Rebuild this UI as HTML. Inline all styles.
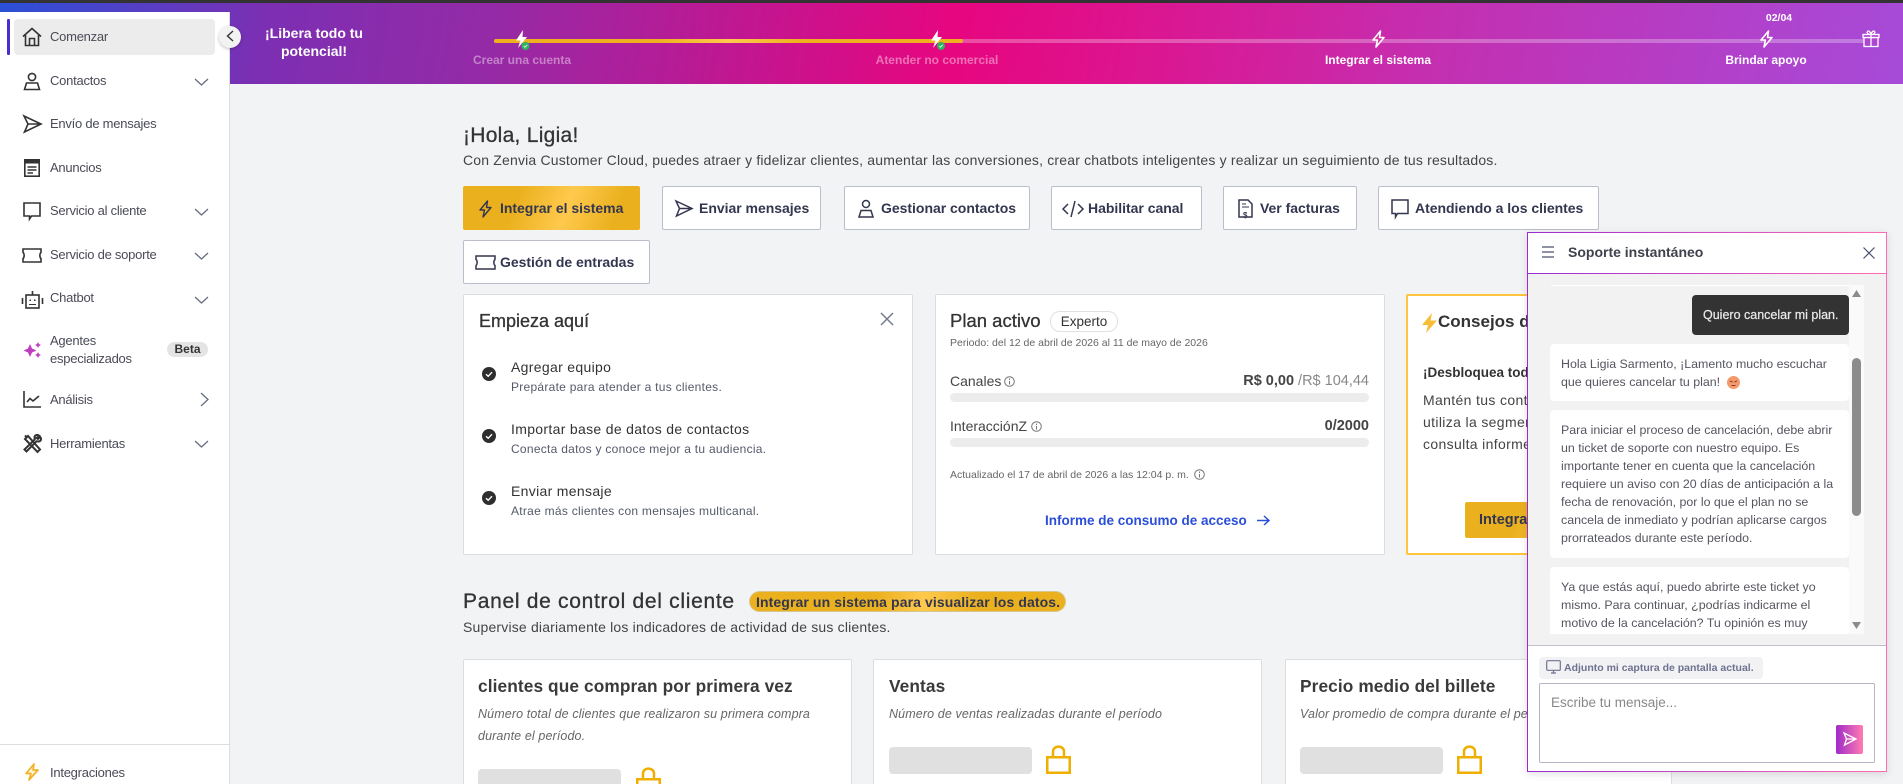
<!DOCTYPE html>
<html lang="es"><head><meta charset="utf-8"><title>Zenvia</title>
<style>
*{box-sizing:border-box}
html,body{margin:0;padding:0;width:1903px;height:784px;overflow:hidden;background:#f2f3f5;font-family:"Liberation Sans",sans-serif;color:#333}
#w{position:relative;width:1903px;height:784px;overflow:hidden;background:#f2f3f5}
.a{position:absolute}
.t{position:absolute;white-space:nowrap;line-height:20px;height:20px}
.c{transform:translateX(-50%)}
.r{transform:translateX(-100%)}
svg{position:absolute;overflow:visible}
.nav{font-size:13px;color:#4a4b57;left:50px;letter-spacing:-.25px}
.ic{fill:none;stroke:#333;stroke-width:1.6}
.chev{fill:none;stroke:#666d80;stroke-width:1.3}
.btn{position:absolute;background:#fff;border:1px solid #bcbdcc;border-radius:2px;height:44px}
.bt{font-size:14px;font-weight:700;color:#33364f;top:198px;letter-spacing:-.02px}
.card{position:absolute;background:#fff;border:1px solid #dcdde1;border-radius:2px}
.gold{background:linear-gradient(110deg,#eab01e 0%,#eab01e 30%,#ffc94d 58%,#eab01e 85%,#eab01e 100%)}
.lab{font-size:12px;font-weight:700;color:#fff;top:50px}
.h{font-size:18px;color:#333;font-weight:400;-webkit-text-stroke:.3px #333}
.ti{font-size:14px;color:#333;left:511px;letter-spacing:.32px}
.su{font-size:12px;color:#555a6a;left:511px;letter-spacing:.27px}
.m{position:absolute;font-size:12.4px;line-height:18px;color:#55565f;white-space:nowrap;left:1561px}
.ph{position:absolute;background:#e0e0e0;border-radius:4px;height:27px;width:143px}
.de{font-size:12.5px;font-style:italic;color:#666;letter-spacing:.12px}
.mt{font-size:17.3px;font-weight:700;color:#3a3a3a;letter-spacing:.1px;top:676px}
.sub{font-size:14px;color:#444;letter-spacing:.18px}
</style></head><body><div id="w">

<div class="a" style="left:0;top:0;width:1903px;height:3px;background:#333"></div>
<div class="a" style="left:0;top:3px;width:1903px;height:81px;background:linear-gradient(100deg,#2a50d8 0%,#7c2fb3 14%,#952aa6 26%,#e6067f 50%,#dc1590 60%,#c42fb0 75%,#a64bd9 100%)"></div>

<!-- progress -->
<div class="a" style="left:494px;top:39px;width:1376px;height:4px;background:rgba(255,255,255,.28);border-radius:2px"></div>
<div class="a" style="left:494px;top:39px;width:469px;height:4px;border-radius:2px;background:linear-gradient(90deg,#eeb01f 0%,#eeb01f 35%,#ffca4f 50%,#eeb01f 65%,#eeb01f 100%)"></div>
<svg style="left:513px;top:30px" width="18" height="18" viewBox="0 0 18 18"><path d="M10 0L3 10.5H7.5L5 18L14 7H9.5Z" fill="#fff"/><circle cx="12.5" cy="16" r="4" fill="#2fb45f"/><path d="M10.8 16l1.2 1.2 2.2-2.2" stroke="#d8f5e0" stroke-width=".9" fill="none"/></svg>
<svg style="left:928px;top:30px" width="18" height="18" viewBox="0 0 18 18"><path d="M10 0L3 10.5H7.5L5 18L14 7H9.5Z" fill="#fff"/><circle cx="13" cy="16" r="4" fill="#2fb45f"/><path d="M11.3 16l1.2 1.2 2.2-2.2" stroke="#d8f5e0" stroke-width=".9" fill="none"/></svg>
<svg style="left:1371px;top:30px" width="15" height="18" viewBox="0 0 15 18"><path d="M9.5 1L2 10H6.5L5 17L13 7.5H8.5Z" fill="#d82ca0" stroke="#fff" stroke-width="1.6" stroke-linejoin="round"/></svg>
<svg style="left:1759px;top:30px" width="15" height="18" viewBox="0 0 15 18"><path d="M9.5 1L2 10H6.5L5 17L13 7.5H8.5Z" fill="#b63cc6" stroke="#fff" stroke-width="1.6" stroke-linejoin="round"/></svg>
<svg style="left:1862px;top:30px" width="18" height="17" viewBox="0 0 18 17"><g fill="#ad47d2" stroke="#fff" stroke-width="1.3"><rect x="2" y="7.5" width="14" height="9"/><rect x="1" y="4.5" width="16" height="3"/><path d="M9 4.5V16.500M9 4.5C6 4.500 4.500 3 5.500 1.500S8.500 2 9 4.500C9.500 2 11.500 0 12.500 1.500S12 4.500 9 4.500Z"/></g></svg>
<div class="t c" style="left:1779px;top:8px;font-size:10.5px;font-weight:700;color:#fff">02/04</div>
<div class="t c lab" style="left:522px;color:rgba(255,255,255,.42)">Crear una cuenta</div>
<div class="t c lab" style="left:937px;color:rgba(255,255,255,.42)">Atender no comercial</div>
<div class="t c lab" style="left:1378px">Integrar el sistema</div>
<div class="t c lab" style="left:1766px">Brindar apoyo</div>
<div class="t c" style="left:314px;top:23px;font-size:14px;font-weight:700;color:#fff">¡Libera todo tu</div>
<div class="t c" style="left:314px;top:41px;font-size:14px;font-weight:700;color:#fff">potencial!</div>

<!-- sidebar -->
<div class="a" style="left:0;top:12px;width:230px;height:772px;background:#fff;border-right:1px solid #dcdde1"></div>
<div class="a" style="left:7px;top:19px;width:3px;height:36px;background:#4a2fd0;border-radius:1px"></div>
<div class="a" style="left:14px;top:19px;width:201px;height:36px;background:#ececec;border-radius:4px"></div>

<svg style="left:22px;top:27px" width="20" height="20" viewBox="0 0 20 20"><path class="ic" d="M1 9.500L10 1.500L19 9.500M3.500 8V18.500H16.500V8M7.500 18.500V11.500H12.500V18.500"/></svg>
<div class="t nav" style="top:27px">Comenzar</div>

<svg style="left:23px;top:72px" width="18" height="19" viewBox="0 0 18 19"><circle class="ic" cx="9" cy="5" r="3.600"/><path class="ic" d="M3.500 11H14.500L16.500 17.500H1.500Z"/></svg>
<div class="t nav" style="top:71px">Contactos</div>
<svg style="left:194px;top:78px" width="15" height="8"><path class="chev" d="M1 1L7.500 7L14 1"/></svg>

<svg style="left:23px;top:115px" width="19" height="18" viewBox="0 0 19 18"><path class="ic" d="M1 1L18 9L1.500 17L5 9ZM5 9H18"/></svg>
<div class="t nav" style="top:114px">Envío de mensajes</div>

<svg style="left:24px;top:159px" width="16" height="18" viewBox="0 0 16 18"><rect class="ic" x=".8" y=".8" width="14.400" height="16.400"/><path d="M1 1H15V4.500H1Z" fill="#333"/><path class="ic" stroke-width="1.200" d="M3.500 8H12.500M3.500 11H12.500M3.500 14H9"/></svg>
<div class="t nav" style="top:158px">Anuncios</div>

<svg style="left:23px;top:202px" width="18" height="18" viewBox="0 0 18 18"><path class="ic" d="M1 1H17V14H8.500L6.500 17V14H1Z"/></svg>
<div class="t nav" style="top:201px">Servicio al cliente</div>
<svg style="left:194px;top:208px" width="15" height="8"><path class="chev" d="M1 1L7.500 7L14 1"/></svg>

<svg style="left:22px;top:248px" width="20" height="15" viewBox="0 0 20 15"><path class="ic" d="M1 1H19V4.500C17.500 5.500 17.500 9.500 19 10.500V14H1V10.500C2.500 9.500 2.500 5.500 1 4.500Z"/></svg>
<div class="t nav" style="top:245px">Servicio de soporte</div>
<svg style="left:194px;top:252px" width="15" height="8"><path class="chev" d="M1 1L7.500 7L14 1"/></svg>

<svg style="left:21px;top:290px" width="23" height="19" viewBox="0 0 23 19"><rect class="ic" x="5" y="5" width="13" height="13"/><path class="ic" d="M11.500 5V1M1.500 8V14M21.500 8V14"/><path d="M8.500 9.500h1.500v1.500h-1.500zM13 9.500h1.500v1.500H13zM8 14h7v1H8z" fill="#333"/></svg>
<div class="t nav" style="top:288px">Chatbot</div>
<svg style="left:194px;top:296px" width="15" height="8"><path class="chev" d="M1 1L7.500 7L14 1"/></svg>

<svg style="left:23px;top:341px" width="19" height="18" viewBox="0 0 19 18"><path fill="#c23cc0" d="M7 3L9 7.500 13.500 9.500 9 11.500 7 16 5 11.500.5 9.500 5 7.500ZM15 1L16 3 18 4 16 5 15 7 14 5 12 4 14 3ZM15 11L16 13 18 14 16 15 15 17 14 15 12 14 14 13Z"/></svg>
<div class="t nav" style="top:331px">Agentes</div>
<div class="t nav" style="top:349px">especializados</div>
<div class="a" style="left:167px;top:342px;width:41px;height:15px;border-radius:8px;background:#e4e4e4"></div>
<div class="t c" style="left:187.500px;top:339px;font-size:12px;font-weight:700;color:#333">Beta</div>

<svg style="left:23px;top:391px" width="18" height="17" viewBox="0 0 18 17"><path class="ic" d="M1 0V16H18"/><path class="ic" d="M4 11L7 7.500L10 10L16 5"/></svg>
<div class="t nav" style="top:390px">Análisis</div>
<svg style="left:200px;top:392px" width="9" height="15"><path class="chev" d="M1 1L8 7.500L1 14"/></svg>

<svg style="left:23px;top:434px" width="19" height="19" viewBox="0 0 19 19"><path d="M2 5L5 2 17 15.500 14.500 18ZM2 1.500L4 3.500M16.500 2C14.500 0 11.500 1 11.500 3.500L11.700 5.500 1.500 15.500 3.500 17.500 13.500 7.300 15.500 7.500C18 7.500 19 4.500 17 3L15 5 13.500 4Z" fill="none" stroke="#333" stroke-width="2"/></svg>
<div class="t nav" style="top:434px">Herramientas</div>
<svg style="left:194px;top:440px" width="15" height="8"><path class="chev" d="M1 1L7.500 7L14 1"/></svg>

<div class="a" style="left:0;top:744px;width:229px;height:1px;background:#dcdde1"></div>
<svg style="left:25px;top:763px" width="14" height="18" viewBox="0 0 14 18"><path d="M9 1L1 10.500H6L4 17L13 7H8Z" fill="#fdf4d8" stroke="#f2b323" stroke-width="1.700" stroke-linejoin="round"/></svg>
<div class="t nav" style="top:763px">Integraciones</div>

<div class="a" style="left:219px;top:26px;width:22px;height:22px;border-radius:50%;background:#f2f2f2;box-shadow:0 1px 3px rgba(0,0,0,.25)"></div>
<svg style="left:226px;top:30px" width="8" height="12"><path d="M7 1L1.500 6L7 11" fill="none" stroke="#333" stroke-width="1.400"/></svg>

<!-- main -->
<div class="t" style="left:463px;top:126px;font-size:21px;color:#333;letter-spacing:.27px;-webkit-text-stroke:.3px #333">¡Hola, Ligia!</div>
<div class="t sub" style="left:463px;top:150px">Con Zenvia Customer Cloud, puedes atraer y fidelizar clientes, aumentar las conversiones, crear chatbots inteligentes y realizar un seguimiento de tus resultados.</div>

<div class="btn gold" style="left:463px;top:186px;width:177px;border:0"></div>
<svg style="left:478px;top:200px" width="15" height="18" viewBox="0 0 15 18"><path d="M9.500 1L2 10H6.500L5 17L13 7.500H8.500Z" fill="none" stroke="#33364f" stroke-width="1.400" stroke-linejoin="round"/></svg>
<div class="t bt" style="left:500px">Integrar el sistema</div>

<div class="btn" style="left:662px;top:186px;width:159px"></div>
<svg style="left:675px;top:200px" width="18" height="17" viewBox="0 0 18 17"><path d="M1 1L17 8.500L1.500 16L4.500 8.500ZM4.500 8.500H17" fill="none" stroke="#33364f" stroke-width="1.500"/></svg>
<div class="t bt" style="left:699px">Enviar mensajes</div>

<div class="btn" style="left:844px;top:186px;width:186px"></div>
<svg style="left:858px;top:199px" width="16" height="19" viewBox="0 0 16 19"><circle cx="8" cy="5" r="3.500" fill="none" stroke="#33364f" stroke-width="1.500"/><path d="M3 11.500H13L15 18H1Z" fill="none" stroke="#33364f" stroke-width="1.500"/></svg>
<div class="t bt" style="left:881px">Gestionar contactos</div>

<div class="btn" style="left:1051px;top:186px;width:151px"></div>
<svg style="left:1062px;top:200px" width="22" height="18" viewBox="0 0 22 18"><path d="M6 4L1 9L6 14M16 4L21 9L16 14M13 1L9 17" fill="none" stroke="#33364f" stroke-width="1.500"/></svg>
<div class="t bt" style="left:1088px">Habilitar canal</div>

<div class="btn" style="left:1223px;top:186px;width:134px"></div>
<svg style="left:1238px;top:199px" width="15" height="19" viewBox="0 0 15 19"><path d="M1 1H10L14 5V18H1Z" fill="none" stroke="#33364f" stroke-width="1.500"/><path d="M4 5H8M4 8H11" stroke="#33364f" stroke-width="1"/></svg>
<div class="t" style="left:1243px;top:206px;font-size:8px;font-weight:700;color:#33364f">$</div>
<div class="t bt" style="left:1260px">Ver facturas</div>

<div class="btn" style="left:1378px;top:186px;width:221px"></div>
<svg style="left:1391px;top:199px" width="18" height="19" viewBox="0 0 18 19"><path d="M1 1H17V14.500H6.500L4.500 18V14.500H1Z" fill="none" stroke="#33364f" stroke-width="1.500"/></svg>
<div class="t bt" style="left:1415px">Atendiendo a los clientes</div>

<div class="btn" style="left:463px;top:240px;width:187px"></div>
<svg style="left:475px;top:255px" width="21" height="15" viewBox="0 0 21 15"><path d="M1 1H20V4.500C18.500 5.500 18.500 9.500 20 10.500V14H1V10.500C2.500 9.500 2.500 5.500 1 4.500Z" fill="none" stroke="#33364f" stroke-width="1.500"/></svg>
<div class="t bt" style="left:500px;top:252px">Gestión de entradas</div>

<!-- card 1 -->
<div class="card" style="left:463px;top:294px;width:450px;height:261px"></div>
<div class="t h" style="left:479px;top:311px">Empieza aquí</div>
<svg style="left:880px;top:312px" width="14" height="14"><path d="M1 1L13 13M13 1L1 13" stroke="#737a8c" stroke-width="1.500" fill="none"/></svg>
<svg style="left:482px;top:367px" width="14" height="14"><circle cx="7" cy="7" r="7" fill="#2e2e2e"/><path d="M4 7.200L6.200 9.300L10 5.200" fill="none" stroke="#fff" stroke-width="1.400"/></svg>
<svg style="left:482px;top:429px" width="14" height="14"><circle cx="7" cy="7" r="7" fill="#2e2e2e"/><path d="M4 7.200L6.200 9.300L10 5.200" fill="none" stroke="#fff" stroke-width="1.400"/></svg>
<svg style="left:482px;top:491px" width="14" height="14"><circle cx="7" cy="7" r="7" fill="#2e2e2e"/><path d="M4 7.200L6.200 9.300L10 5.200" fill="none" stroke="#fff" stroke-width="1.400"/></svg>
<div class="t ti" style="top:357px">Agregar equipo</div>
<div class="t su" style="top:377px">Prepárate para atender a tus clientes.</div>
<div class="t ti" style="top:419px">Importar base de datos de contactos</div>
<div class="t su" style="top:439px">Conecta datos y conoce mejor a tu audiencia.</div>
<div class="t ti" style="top:481px">Enviar mensaje</div>
<div class="t su" style="top:501px">Atrae más clientes con mensajes multicanal.</div>

<!-- card 2 -->
<div class="card" style="left:935px;top:294px;width:450px;height:261px"></div>
<div class="t h" style="left:950px;top:311px;font-size:18.500px">Plan activo</div>
<div class="a" style="left:1050px;top:311px;width:68px;height:21px;border:1px solid #e0e0e4;border-radius:10px"></div>
<div class="t c" style="left:1084px;top:312px;font-size:13.500px;color:#333">Experto</div>
<div class="t" style="left:950px;top:333px;font-size:10.500px;color:#666">Periodo: del 12 de abril de 2026 al 11 de mayo de 2026</div>
<div class="t" style="left:950px;top:371px;font-size:14px;color:#444">Canales</div>
<svg style="left:1004px;top:376px" width="11" height="11"><circle cx="5.500" cy="5.500" r="4.800" fill="none" stroke="#777"/><path d="M5.500 5V8.500M5.500 2.500V4" stroke="#777"/></svg>
<div class="t r" style="left:1369px;top:371px;font-size:14.500px;color:#888"><b style="color:#444">R$ 0,00</b> /R$ 104,44</div>
<div class="a" style="left:950px;top:393px;width:419px;height:9px;border-radius:5px;background:#ececec"></div>
<div class="t" style="left:950px;top:416px;font-size:14px;color:#444">InteracciónZ</div>
<svg style="left:1031px;top:421px" width="11" height="11"><circle cx="5.500" cy="5.500" r="4.800" fill="none" stroke="#777"/><path d="M5.500 5V8.500M5.500 2.500V4" stroke="#777"/></svg>
<div class="t r" style="left:1369px;top:416px;font-size:14.500px;font-weight:700;color:#444">0/2000</div>
<div class="a" style="left:950px;top:438px;width:419px;height:9px;border-radius:5px;background:#ececec"></div>
<div class="t" style="left:950px;top:465px;font-size:10.500px;color:#666">Actualizado el 17 de abril de 2026 a las 12:04 p. m.</div>
<svg style="left:1194px;top:469px" width="11" height="11"><circle cx="5.500" cy="5.500" r="4.800" fill="none" stroke="#777"/><path d="M5.500 5V8.500M5.500 2.500V4" stroke="#777"/></svg>
<div class="t" style="left:1045px;top:511px;font-size:13.500px;font-weight:700;color:#2b4ed8">Informe de consumo de acceso</div>
<svg style="left:1257px;top:515px" width="13" height="11"><path d="M0 5.500H11.500M7 1L12 5.500L7 10" fill="none" stroke="#2b4ed8" stroke-width="1.500"/></svg>

<!-- card 3 -->
<div class="a" style="left:1406px;top:294px;width:300px;height:261px;background:#fff;border:2px solid #ffc53d;border-radius:2px"></div>
<svg style="left:1422px;top:313px" width="15" height="20" viewBox="0 0 15 20"><path d="M10 0L0 12H6L4 20L15 7.500H8.500Z" fill="#f7bd36"/></svg>
<div class="t" style="left:1438px;top:312px;font-size:17px;font-weight:700;color:#333">Consejos de uso</div>
<div class="t" style="left:1423px;top:363px;font-size:13.500px;font-weight:700;color:#333">¡Desbloquea todo</div>
<div class="t" style="left:1423px;top:390px;font-size:14px;letter-spacing:.35px;color:#444">Mantén tus contactos</div>
<div class="t" style="left:1423px;top:412px;font-size:14px;letter-spacing:.35px;color:#444">utiliza la segmentación</div>
<div class="t" style="left:1423px;top:434px;font-size:14px;letter-spacing:.35px;color:#444">consulta informes</div>
<div class="a gold" style="left:1465px;top:502px;width:180px;height:36px;border-radius:2px"></div>
<div class="t" style="left:1479px;top:510px;font-size:14.500px;font-weight:700;color:#33364f">Integrar</div>

<!-- panel -->
<div class="t" style="left:463px;top:592px;font-size:21px;color:#333;letter-spacing:.7px;-webkit-text-stroke:.3px #333">Panel de control del cliente</div>
<div class="a" style="left:749px;top:591px;width:317px;height:21px;border-radius:11px;border:1px solid #d8c690;background:linear-gradient(90deg,#eab01e 0%,#eab01e 40%,#ffc94d 55%,#eab01e 72%,#eab01e 100%)"></div>
<div class="t" style="left:756px;top:592px;font-size:14px;letter-spacing:.1px;font-weight:700;color:#33364f">Integrar un sistema para visualizar los datos.</div>
<div class="t sub" style="left:463px;top:617px">Supervise diariamente los indicadores de actividad de sus clientes.</div>

<div class="card" style="left:463px;top:659px;width:389px;height:140px"></div>
<div class="card" style="left:873px;top:659px;width:389px;height:140px"></div>
<div class="card" style="left:1285px;top:659px;width:387px;height:140px"></div>
<div class="t mt" style="left:478px">clientes que compran por primera vez</div>
<div class="t mt" style="left:889px">Ventas</div>
<div class="t mt" style="left:1300px">Precio medio del billete</div>
<div class="t de" style="left:478px;top:704px">Número total de clientes que realizaron su primera compra</div>
<div class="t de" style="left:478px;top:726px">durante el período.</div>
<div class="t de" style="left:889px;top:704px">Número de ventas realizadas durante el período</div>
<div class="t de" style="left:1300px;top:704px">Valor promedio de compra durante el período</div>
<div class="ph" style="left:478px;top:769px"></div>
<div class="ph" style="left:889px;top:747px"></div>
<div class="ph" style="left:1300px;top:747px"></div>
<svg style="left:636px;top:767px" width="25" height="29" viewBox="0 0 25 29"><rect x="1.250" y="12.250" width="22.500" height="15.500" fill="none" stroke="#efae00" stroke-width="2.500"/><path d="M7 12V6.500C7 0 18 0 18 6.500V12" fill="none" stroke="#efae00" stroke-width="2.500"/></svg>
<svg style="left:1046px;top:745px" width="25" height="29" viewBox="0 0 25 29"><rect x="1.250" y="12.250" width="22.500" height="15.500" fill="none" stroke="#efae00" stroke-width="2.500"/><path d="M7 12V6.500C7 0 18 0 18 6.500V12" fill="none" stroke="#efae00" stroke-width="2.500"/></svg>
<svg style="left:1457px;top:745px" width="25" height="29" viewBox="0 0 25 29"><rect x="1.250" y="12.250" width="22.500" height="15.500" fill="none" stroke="#efae00" stroke-width="2.500"/><path d="M7 12V6.500C7 0 18 0 18 6.500V12" fill="none" stroke="#efae00" stroke-width="2.500"/></svg>

<!-- chat panel -->
<div class="a" style="left:1527px;top:232px;width:360px;height:540px;background:linear-gradient(90deg,#9a2bd0,#ff6cb5);box-shadow:0 2px 8px rgba(0,0,0,.12)"></div>
<div class="a" style="left:1528px;top:233px;width:358px;height:40px;background:#fff"></div>
<div class="a" style="left:1528px;top:274px;width:358px;height:371px;background:#f2f2f2"></div>
<div class="a" style="left:1528px;top:645px;width:358px;height:126px;background:#fff;border-top:1px solid #c0c0cc"></div>
<svg style="left:1542px;top:246px" width="12" height="12"><path d="M0 1H12M0 6H12M0 11H12" stroke="#6a6f88" stroke-width="1.500"/></svg>
<div class="t" style="left:1568px;top:242px;font-size:14px;font-weight:700;color:#3f414d">Soporte instantáneo</div>
<svg style="left:1863px;top:247px" width="12" height="12"><path d="M.5 .5L11.500 11.500M11.500 .5L.5 11.500" stroke="#4a5070" stroke-width="1.200"/></svg>

<div class="a" style="left:1550px;top:285px;width:314px;height:349px;overflow:hidden">
  <div class="a" style="left:1px;top:0;width:298px;height:1px;background:#fff"></div>
  <div class="a" style="left:299px;top:0;width:15px;height:349px;background:#fafafa"></div>
  <div class="a" style="left:142px;top:10px;width:157px;height:40px;background:#333;border-radius:4px"></div>
  <div class="a" style="left:0;top:59px;width:299px;height:57px;background:#fff;border-radius:4px"></div>
  <div class="a" style="left:0;top:125px;width:299px;height:148px;background:#fff;border-radius:4px"></div>
  <div class="a" style="left:0;top:282px;width:299px;height:90px;background:#fff;border-radius:4px"></div>
  <div class="a" style="left:302px;top:73px;width:9px;height:158px;background:#8c8c8c;border-radius:5px"></div>
  <svg style="left:302px;top:5px" width="9" height="7"><path d="M0 7H9L4.500 0Z" fill="#8c8c8c"/></svg>
  <svg style="left:302px;top:337px" width="9" height="7"><path d="M0 0H9L4.500 7Z" fill="#8c8c8c"/></svg>
</div>
<div class="t" style="left:1703px;top:305px;font-size:12.500px;color:#e8e8e8;-webkit-text-stroke:.25px #e8e8e8">Quiero cancelar mi plan.</div>
<div class="m" style="top:355px">Hola Ligia Sarmento, ¡Lamento mucho escuchar</div>
<div class="m" style="top:373px">que quieres cancelar tu plan!</div>
<svg style="left:1727px;top:376px" width="13" height="13"><circle cx="6.500" cy="6.500" r="6.500" fill="#f49a6a"/><path d="M3 5L5.500 6M10 5L7.500 6M4.500 9.500H8.500" stroke="#8a3a30" stroke-width="1" fill="none"/></svg>
<div class="m" style="top:421px">Para iniciar el proceso de cancelación, debe abrir</div>
<div class="m" style="top:439px">un ticket de soporte con nuestro equipo. Es</div>
<div class="m" style="top:457px">importante tener en cuenta que la cancelación</div>
<div class="m" style="top:475px">requiere un aviso con 20 días de anticipación a la</div>
<div class="m" style="top:493px">fecha de renovación, por lo que el plan no se</div>
<div class="m" style="top:511px">cancela de inmediato y podrían aplicarse cargos</div>
<div class="m" style="top:529px">prorrateados durante este período.</div>
<div class="m" style="top:578px">Ya que estás aquí, puedo abrirte este ticket yo</div>
<div class="m" style="top:596px">mismo. Para continuar, ¿podrías indicarme el</div>
<div class="m" style="top:614px">motivo de la cancelación? Tu opinión es muy</div>

<div class="a" style="left:1539px;top:657px;width:224px;height:22px;background:#f2f2f5;border-radius:4px"></div>
<svg style="left:1546px;top:660px" width="15" height="14" viewBox="0 0 15 14"><rect x=".7" y=".7" width="13.600" height="9.600" rx="1" fill="none" stroke="#6e7290" stroke-width="1.200"/><path d="M5 13H10M7.500 10.500V13" stroke="#6e7290" stroke-width="1.200"/></svg>
<div class="t" style="left:1564px;top:658px;font-size:10.500px;font-weight:700;color:#6e7290">Adjunto mi captura de pantalla actual.</div>
<div class="a" style="left:1539px;top:683px;width:336px;height:80px;border:1px solid #b5b5c5;border-radius:2px;background:#fff"></div>
<div class="t" style="left:1551px;top:693px;font-size:13.500px;color:#888">Escribe tu mensaje...</div>
<div class="a" style="left:1836px;top:725px;width:27px;height:29px;border-radius:2px;background:linear-gradient(90deg,#a02bc8,#ff7cb0)"></div>
<svg style="left:1843px;top:732px" width="14" height="14" viewBox="0 0 14 14"><path d="M1 1L13 7L1.500 13L3.500 7ZM3.500 7H13" fill="none" stroke="#fff" stroke-width="1.300"/></svg>

</div></body></html>
